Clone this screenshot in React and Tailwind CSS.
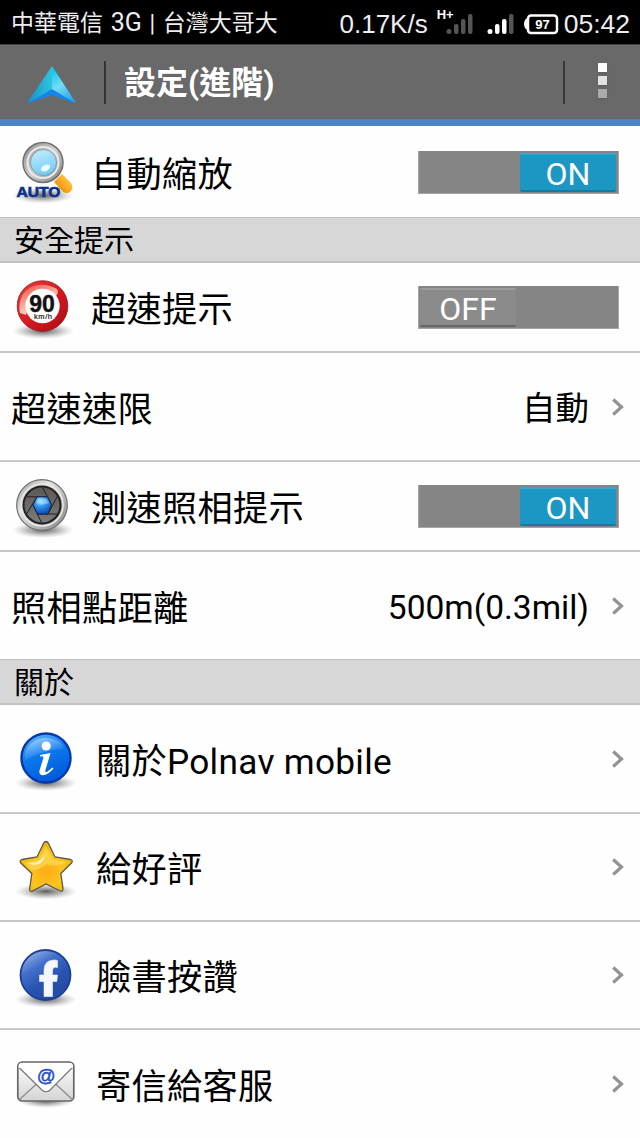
const Shadow = ({ cx, cy, rx = 28, ry = 6 }) => (
  <>
    <defs>
      <radialGradient id="shadow">
        <stop offset="0" stopColor="#333" stopOpacity="0.8" />
        <stop offset="0.5" stopColor="#666" stopOpacity="0.45" />
        <stop offset="1" stopColor="#999" stopOpacity="0" />
      </radialGradient>
    </defs>
    <ellipse cx={cx} cy={cy} rx={rx} ry={ry} fill="url(#shadow)" />
  </>
);

const ZoomIcon = () => (
  <svg width="64" height="66" viewBox="0 0 64 66">
    <defs>
      <linearGradient id="zoomRing" x1="0" y1="0" x2="1" y2="1">
        <stop offset="0" stopColor="#8b8b8b" />
        <stop offset="0.5" stopColor="#d0d0d0" />
        <stop offset="1" stopColor="#777" />
      </linearGradient>
      <linearGradient id="zoomGlass" x1="0" y1="0" x2="0.3" y2="1">
        <stop offset="0" stopColor="#c6effd" />
        <stop offset="1" stopColor="#74cdf5" />
      </linearGradient>
      <linearGradient id="zoomHandle" x1="1" y1="0" x2="0" y2="1">
        <stop offset="0.3" stopColor="#ffbf35" />
        <stop offset="0.8" stopColor="#ef8c08" />
      </linearGradient>
    </defs>
    <Shadow cx="32" cy="55.500" rx="31" ry="8" />
    <path d="M43 42 L51 34 L60 43 Q63 48 59.500 51.500 Q56 54.500 51.500 51.500Z" fill="url(#zoomHandle)" />
    <circle cx="32" cy="22.500" r="20" fill="url(#zoomRing)" stroke="#707070" strokeWidth="1.500" />
    <circle cx="32" cy="22.500" r="15.500" fill="none" stroke="#e9e9e9" strokeWidth="2" />
    <circle cx="32.500" cy="22.500" r="13" fill="url(#zoomGlass)" stroke="#7d9199" strokeWidth="0.800" />
    <ellipse cx="34.500" cy="28" rx="5" ry="3" fill="#e9f9ff" transform="rotate(-28 34.500 28)" />
    <text x="5.500" y="56.500" fontFamily="Liberation Sans, sans-serif" fontWeight="bold" fontSize="15.500" fill="#0b318f" stroke="#0b318f" strokeWidth="0.700" textLength="44" lengthAdjust="spacingAndGlyphs">AUTO</text>
  </svg>
);

const SpeedIcon = () => (
  <svg width="64" height="66" viewBox="0 0 64 66">
    <defs>
      <linearGradient id="speedRing" x1="0" y1="0" x2="1" y2="1">
        <stop offset="0" stopColor="#ee3c36" />
        <stop offset="0.55" stopColor="#d31820" />
        <stop offset="1" stopColor="#a90d15" />
      </linearGradient>
      <linearGradient id="speedGloss" x1="0" y1="0" x2="0.6" y2="1">
        <stop offset="0" stopColor="#ec4a40" />
        <stop offset="0.7" stopColor="#fbc5b8" />
      </linearGradient>
    </defs>
    <Shadow cx="32" cy="56" rx="31" ry="8" />
    <circle cx="31.500" cy="31" r="25.300" fill="url(#speedRing)" stroke="#8d1a1c" strokeWidth="0.800" />
    <path d="M9 38 C5 15 25 3 46 14 Q48 17 45 21 C36 15 18 22 15 40Z" fill="url(#speedGloss)" />
    <circle cx="31.500" cy="31" r="17.200" fill="#fcfcfc" />
    <text x="31" y="36.500" textAnchor="middle" fontFamily="Liberation Sans, sans-serif" fontWeight="bold" fontSize="23" fill="#111" stroke="#111" strokeWidth="0.400">90</text>
    <text x="32" y="44" textAnchor="middle" fontFamily="Liberation Sans, sans-serif" fontSize="7.500" fill="#222" stroke="#222" strokeWidth="0.200" textLength="18">km/h</text>
  </svg>
);

const CameraIcon = () => (
  <svg width="64" height="66" viewBox="0 0 64 66">
    <defs>
      <linearGradient id="camRing" x1="0" y1="0" x2="1" y2="1">
        <stop offset="0" stopColor="#9c9c9c" />
        <stop offset="0.35" stopColor="#e4e4e4" />
        <stop offset="1" stopColor="#838383" />
      </linearGradient>
      <radialGradient id="camLens" cx="0.4" cy="0.25" r="0.8">
        <stop offset="0" stopColor="#b5e7ff" />
        <stop offset="0.4" stopColor="#3295ef" />
        <stop offset="1" stopColor="#0647b4" />
      </radialGradient>
      <linearGradient id="camBlade" x1="0" y1="0" x2="0" y2="1">
        <stop offset="0" stopColor="#5c5856" />
        <stop offset="1" stopColor="#7b7b7b" />
      </linearGradient>
    </defs>
    <Shadow cx="32" cy="56" rx="31" ry="8" />
    <circle cx="31" cy="31" r="25.300" fill="url(#camRing)" stroke="#707070" strokeWidth="1.200" />
    <circle cx="31" cy="31" r="21" fill="none" stroke="#e8e8e8" strokeWidth="1.500" />
    <circle cx="31" cy="31" r="19.500" fill="#221f1e" />
    <circle cx="31" cy="31" r="17.500" fill="url(#camBlade)" />
    {/* aperture blades: every side of the hexagon runs on to the ring */}
    <path d="M37 22.800 L16 22.800 M26 22.800 L15.500 40 M22 31 L30.500 48.500 M26.500 40 L46 40 M37 40 L46.500 22 M40.500 30.500 L31.500 13.500" stroke="#231f1e" strokeWidth="1" fill="none" />
    <path d="M26 22.800 H36.500 L40.500 30.500 L37 40 H26.500 L22 31Z" fill="url(#camLens)" stroke="#18263b" strokeWidth="1" />
    <path d="M27 25 H35.500 L38 29 Q31 32 25.500 29Z" fill="#a5dcff" opacity="0.55" />
  </svg>
);

const InfoIcon = () => (
  <svg width="64" height="66" viewBox="0 0 64 66">
    <defs>
      <linearGradient id="infoFill" x1="0.2" y1="0" x2="0.6" y2="1">
        <stop offset="0" stopColor="#64b6fa" />
        <stop offset="0.45" stopColor="#0c78ec" />
        <stop offset="1" stopColor="#0058dc" />
      </linearGradient>
      <linearGradient id="infoGloss" x1="0" y1="0" x2="0.5" y2="1">
        <stop offset="0" stopColor="#b9e1ff" stopOpacity="0.9" />
        <stop offset="1" stopColor="#3294f3" stopOpacity="0.1" />
      </linearGradient>
    </defs>
    <Shadow cx="32" cy="56" rx="31" ry="8" />
    <circle cx="32" cy="31" r="24.500" fill="url(#infoFill)" stroke="#0839ad" strokeWidth="2.400" />
    <path d="M11 33 C10 15 28 5 46 15 Q51 20 49 22 C38 22 24 26 11 33Z" fill="url(#infoGloss)" />
    <circle cx="32.200" cy="19" r="4.600" fill="#fff" />
    <path d="M26 28 L36.500 26 L31.500 43 Q30.500 46 33.500 44.500 L38.500 40.500 L39.500 41.500 Q34 48 29 48.300 Q24.500 48 25.500 43.500 L29.500 30.500 Q29 28.800 26 29.500Z" fill="#fff" />
  </svg>
);

const StarIcon = () => (
  <svg width="64" height="66" viewBox="0 0 64 66">
    <defs>
      <radialGradient id="starFill" cx="0.5" cy="0.6" r="0.55">
        <stop offset="0" stopColor="#ffab16" />
        <stop offset="0.6" stopColor="#fcc51d" />
        <stop offset="1" stopColor="#ecb70f" />
      </radialGradient>
    </defs>
    <Shadow cx="32" cy="56.500" rx="31" ry="8" />
    <path d="M32 6.500 Q33.500 6.500 34.500 8.500 L41 22 L56.500 24.500 Q59.500 25.500 57.500 28 L46.800 38.500 L49 53.500 Q49 57 46.500 56 L32 49 L18 56.300 Q15.500 57 15.700 53.500 L17.800 38.500 L6.800 28 Q5 25.500 8 24.500 L23 22 L29.500 8.500 Q30.500 6.500 32 6.500Z" fill="url(#starFill)" stroke="#5c5848" strokeWidth="1.300" />
    <path d="M32 11 L38.500 24.500 L53 27 Q42 33 33 29 Q24 36 17 35 L11 28 L25 24.500Z" fill="#ffe065" opacity="0.55" />
    <path d="M14 27.500 Q23 29 28 23.500 Q32 20 31 15 Q32 25 25 29 Q18 31 14 27.500Z" fill="#fffbdc" opacity="0.8" />
  </svg>
);

const FacebookIcon = () => (
  <svg width="64" height="66" viewBox="0 0 64 66">
    <defs>
      <linearGradient id="fbFill" x1="0.1" y1="0" x2="0.7" y2="1">
        <stop offset="0" stopColor="#a7bff0" />
        <stop offset="0.35" stopColor="#426fca" />
        <stop offset="0.65" stopColor="#2853b0" />
        <stop offset="1" stopColor="#244aa3" />
      </linearGradient>
    </defs>
    <Shadow cx="32" cy="56.500" rx="31" ry="8" />
    <circle cx="31.500" cy="32" r="25" fill="url(#fbFill)" stroke="#1e3f96" strokeWidth="1.800" />
    <path d="M30 53.500 V38.500 H25.500 V32 H30 V27 Q30 18.500 38 17.200 Q41 16.500 43.500 17.500 V24.500 Q38.500 23 38.500 28 V32 H43.500 L42.800 38.500 H38.500 V53.500Z" fill="#f4f7ff" stroke="#fff" strokeWidth="0.500" />
  </svg>
);

const MailIcon = () => (
  <svg width="64" height="66" viewBox="0 0 64 66">
    <defs>
      <linearGradient id="mailFill" x1="0" y1="0" x2="0" y2="1">
        <stop offset="0" stopColor="#fff" />
        <stop offset="1" stopColor="#d4d4d4" />
      </linearGradient>
    </defs>
    <Shadow cx="32" cy="49" rx="28" ry="7" />
    <rect x="3.800" y="10" width="56" height="39" rx="4.500" fill="url(#mailFill)" stroke="#666" strokeWidth="1.700" />
    <path d="M5 48 L23 31.500 M59 48 L41 31.500" stroke="#888" strokeWidth="1.100" fill="none" />
    <path d="M5 15.500 L28 38 Q32 41.500 36 38 L58.500 15.500" stroke="#777" strokeWidth="1.200" fill="#fff" />
    <path d="M4.700 16 V13.500 Q5 10.900 8 10.900 H56 Q58.500 10.900 58.900 13.500 V16Z" fill="#fff" />
    <text x="32" y="30" textAnchor="middle" fontFamily="Liberation Sans, sans-serif" fontStyle="italic" fontSize="18.500" fill="#2450c8" stroke="#2450c8" strokeWidth="0.500">@</text>
  </svg>
);

const Chevron = () => (
  <svg width="12" height="18" viewBox="0 0 12 18" className="shrink-0">
    <path d="M1.200 1.500 L9.500 9 L1.200 16.500" fill="none" stroke="#939393" strokeWidth="3.200" />
  </svg>
);

const Toggle = ({ on }) => (
  <div className={`flex h-[43px] w-[201px] shrink-0 border-x border-b border-[#a6a6a6] bg-[#858585] pt-0.5 pr-0.5 pb-px pl-px ${on ? "justify-end" : "justify-start"}`}>
    <div className={`flex h-[39px] w-[96px] items-center justify-center rounded-xs border-t-2 border-b-2 pt-1 font-[Roboto,sans-serif] text-[32px] leading-none text-white ${on ? "border-t-[#36a6ca] border-b-[#187a9d] bg-[#1c96c2]" : "border-t-[#9c9c9c] border-b-[#686868] bg-[#8b8b8b]"}`}>
      {on ? "ON" : "OFF"}
    </div>
  </div>
);

const Label = ({ children }) => (
  <span className="font-[Roboto,'Noto_Sans_CJK_TC',sans-serif] text-[35.200px] leading-none tracking-[0.3px] whitespace-nowrap">{children}</span>
);

const SwitchRow = ({ icon, label, on, className }) => (
  <div className={`flex items-center border-[#c6c6c6] pr-[21px] pl-[11px] ${className}`}>
    <div className="shrink-0 pt-px">{icon}</div>
    <div className="flex-1 pt-2 pl-4">
      <Label>{label}</Label>
    </div>
    <Toggle on={on} />
  </div>
);

const ValueRow = ({ label, value, className }) => (
  <div className={`flex items-center border-[#c6c6c6] pr-4 pl-[11px] ${className}`}>
    <div className="flex-1 pt-2">
      <Label>{label}</Label>
    </div>
    <div className="mr-[23px] pt-1 font-[Roboto,'Noto_Sans_CJK_TC',sans-serif] text-[33.500px] leading-none">{value}</div>
    <Chevron />
  </div>
);

const LinkRow = ({ icon, label, className = "h-[108px] border-b-2" }) => (
  <div className={`flex items-center border-[#c6c6c6] pr-4 pl-[14px] ${className}`}>
    <div className="shrink-0 pt-0.5">{icon}</div>
    <div className="flex-1 pt-2 pl-[18px]">
      <Label>{label}</Label>
    </div>
    <Chevron />
  </div>
);

const SectionTitle = ({ children }) => (
  <div className="flex h-[46px] items-center border-t border-b-2 border-[#c2c2c2] bg-[#d7d7d7] pb-[3px] pl-[14px] text-[30px] leading-none">
    {children}
  </div>
);

const Signal = ({ level }) => (
  <svg width="27" height="22" viewBox="0 0 27 22">
    <circle cx="3" cy="18.500" r="2.500" fill={level > 0 ? "#fff" : "#555"} />
    <rect x="8" y="11" width="4.500" height="10" rx="2" fill={level > 1 ? "#fff" : "#555"} />
    <rect x="15" y="6" width="4.500" height="15" rx="2" fill={level > 2 ? "#fff" : "#555"} />
    <rect x="22" y="1" width="4.500" height="20" rx="2" fill={level > 3 ? "#fff" : "#555"} />
  </svg>
);

const StatusBar = () => (
  <div className="flex h-11 items-center bg-black pr-[10px] pl-[11px] text-[#eee]">
    <span className="flex-1 font-[Roboto,'Noto_Sans_CJK_TC',sans-serif] text-[23px] leading-none [word-spacing:2px] whitespace-nowrap">
      中華電信 <span className="text-[25px]">3G</span> | 台灣大哥大
    </span>
    <span className="pt-1 font-['Liberation_Sans',sans-serif] text-[26px] leading-none">0.17K/s</span>
    <div className="ml-[9px] flex items-center pt-1">
      <span className="-mt-5 -mr-2 font-['Liberation_Sans',sans-serif] text-[13px] leading-none font-bold text-white">H+</span>
      <Signal level={0} />
    </div>
    <div className="ml-[14px] pt-1">
      <Signal level={3} />
    </div>
    <svg width="35" height="21" viewBox="0 0 35 21" className="mt-1 ml-[10px]">
      <rect x="4" y="1.500" width="29" height="17.500" rx="3" fill="none" stroke="#fff" strokeWidth="2.500" />
      <path d="M4 4 Q0 5 0 10 Q0 15 4 16Z" fill="#fff" />
      <text x="18.500" y="14.500" textAnchor="middle" fontFamily="Liberation Sans, sans-serif" fontWeight="bold" fontSize="13" fill="#fff">97</text>
    </svg>
    <span className="ml-[5px] pt-1 font-['Liberation_Sans',sans-serif] text-[26.500px] leading-none">05:42</span>
  </div>
);

const Header = () => (
  <div className="flex h-[82px] items-center border-t border-b-[7px] border-t-[#444] border-b-[#4b83c4] bg-[#696969] pl-[26px]">
    <svg width="51" height="40" viewBox="0 0 51 40" className="mt-2">
      <defs>
        <linearGradient id="navLeft" x1="0" y1="0" x2="1" y2="0">
          <stop offset="0" stopColor="#1590c8" />
          <stop offset="1" stopColor="#2fc4df" />
        </linearGradient>
        <linearGradient id="navRight" x1="0.2" y1="0" x2="0.6" y2="1">
          <stop offset="0" stopColor="#08c5ed" />
          <stop offset="0.5" stopColor="#72def6" />
          <stop offset="1" stopColor="#2ba9ee" />
        </linearGradient>
      </defs>
      <path d="M26 0 L1 37 L26 27Z" fill="url(#navLeft)" />
      <path d="M26 0 L50 37 L26 27Z" fill="url(#navRight)" />
      <path d="M26 23 L50 37.500 L26 29 L1 37.500Z" fill="#1684ef" />
    </svg>
    <div className="ml-[27px] h-[43px] w-0.5 bg-[#333]" />
    <h1 className="ml-[18px] flex-1 pt-0.5 font-[Roboto,'Noto_Sans_CJK_TC',sans-serif] text-[32px] leading-none font-bold text-white">設定(進階)</h1>
    <div className="h-[43px] w-0.5 bg-[#383838]" />
    <div className="mr-[33px] mb-1 ml-[33px] flex flex-col gap-1">
      <div className="h-[9px] w-[9px] bg-white shadow" />
      <div className="h-[9px] w-[9px] bg-[#e2e2e2] shadow" />
      <div className="h-[9px] w-[9px] bg-[#ababab] shadow" />
    </div>
  </div>
);

const App = () => {
  return (
    <div className="h-[1138px] w-[640px] overflow-hidden bg-[#fefefe] font-['Noto_Sans_CJK_TC',sans-serif] text-black">
      <StatusBar />
      <Header />
      <SwitchRow icon={<ZoomIcon />} label="自動縮放" on className="h-[91px] pt-px" />
      <SectionTitle>安全提示</SectionTitle>
      <SwitchRow icon={<SpeedIcon />} label="超速提示" className="h-[90px] border-b-2" />
      <ValueRow label="超速速限" value="自動" className="h-[109px] border-b-2" />
      <SwitchRow icon={<CameraIcon />} label="測速照相提示" on className="h-[90px] border-b-2" />
      <ValueRow label="照相點距離" value="500m(0.3mil)" className="h-[107px]" />
      <SectionTitle>關於</SectionTitle>
      <LinkRow icon={<InfoIcon />} label="關於Polnav mobile" className="h-[109px] border-b-2" />
      <LinkRow icon={<StarIcon />} label="給好評" />
      <LinkRow icon={<FacebookIcon />} label="臉書按讚" />
      <LinkRow icon={<MailIcon />} label="寄信給客服" className="h-[108px]" />
    </div>
  );
};

export default App;
